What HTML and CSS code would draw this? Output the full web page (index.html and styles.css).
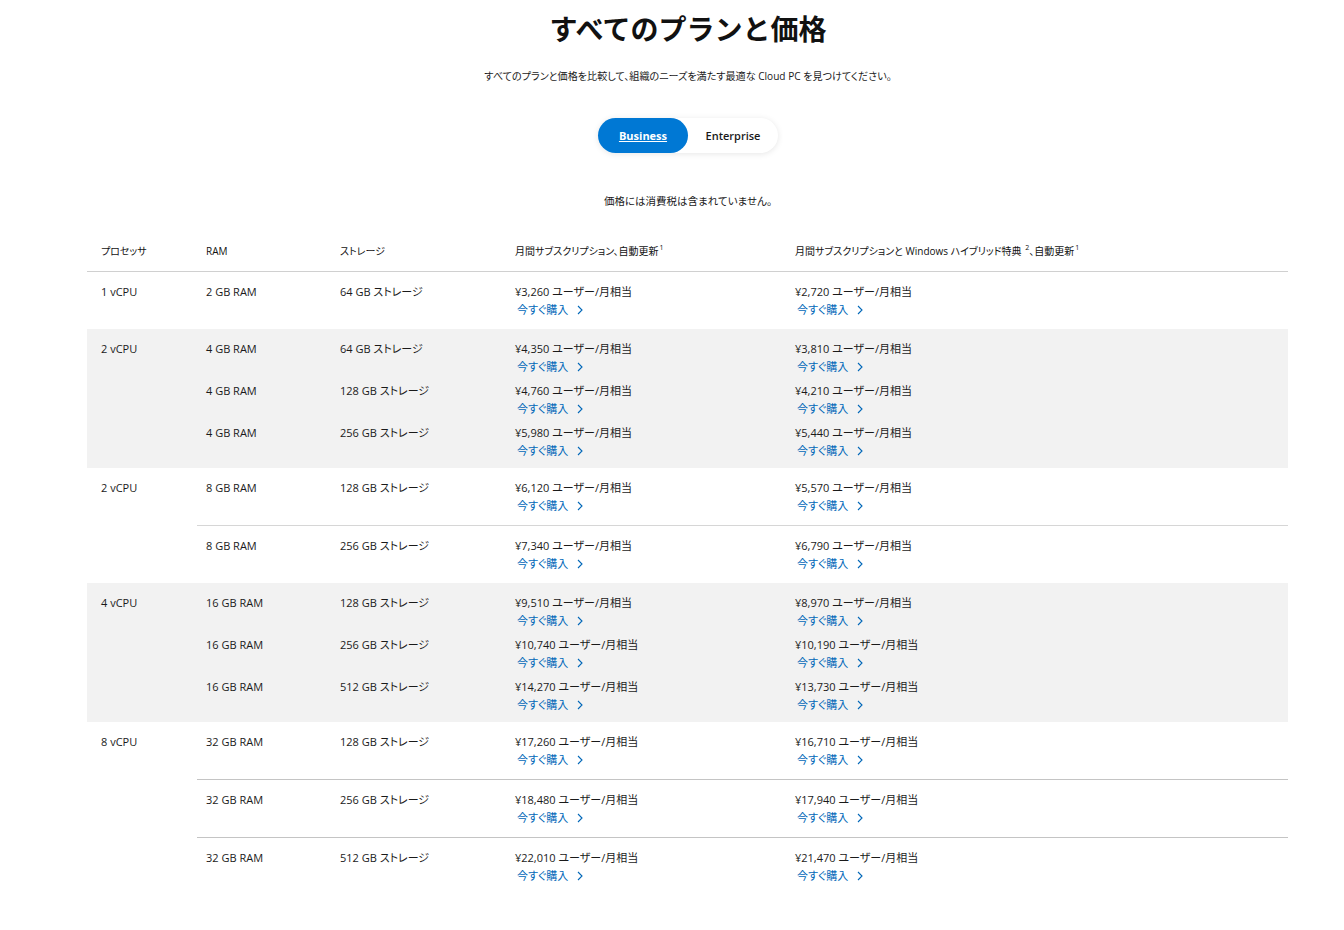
FILE: index.html
```html
<!DOCTYPE html>
<html lang="ja">
<head>
<meta charset="utf-8">
<title>すべてのプランと価格</title>
<link rel="stylesheet" href="styles.css">
</head>
<body>
<main class="page">
  <div class="intro">
    <h1 class="title">すべてのプランと価格</h1>
    <p class="subtitle">すべてのプランと価格を比較して、組織のニーズを満たす最適な Cloud PC を見つけてください。</p>
    <div class="toggle-wrap">
      <div class="toggle">
        <a class="tab active" href="#">Business</a>
        <a class="tab" href="#">Enterprise</a>
      </div>
    </div>
    <p class="note">価格には消費税は含まれていません。</p>
  </div>

  <div class="table">
    <div class="head">
      <div>プロセッサ</div>
      <div>RAM</div>
      <div>ストレージ</div>
      <div>月間サブスクリプション、自動更新<sup>1</sup></div>
      <div>月間サブスクリプションと Windows ハイブリッド特典 <sup>2</sup>、自動更新<sup>1</sup></div>
    </div>

    <div class="group white">
      <div class="proc">1 vCPU</div>
      <div class="subs">
        <div class="sub"><div>2 GB RAM</div><div>64 GB ストレージ</div><div class="price"><span>¥3,260 ユーザー/月相当</span><a href="#">今すぐ購入<svg viewBox="0 0 6 10"><path d="M1 1l4 4-4 4"/></svg></a></div><div class="price"><span>¥2,720 ユーザー/月相当</span><a href="#">今すぐ購入<svg viewBox="0 0 6 10"><path d="M1 1l4 4-4 4"/></svg></a></div></div>
      </div>
    </div>

    <div class="group gray">
      <div class="proc">2 vCPU</div>
      <div class="subs">
        <div class="sub"><div>4 GB RAM</div><div>64 GB ストレージ</div><div class="price"><span>¥4,350 ユーザー/月相当</span><a href="#">今すぐ購入<svg viewBox="0 0 6 10"><path d="M1 1l4 4-4 4"/></svg></a></div><div class="price"><span>¥3,810 ユーザー/月相当</span><a href="#">今すぐ購入<svg viewBox="0 0 6 10"><path d="M1 1l4 4-4 4"/></svg></a></div></div>
        <div class="sub"><div>4 GB RAM</div><div>128 GB ストレージ</div><div class="price"><span>¥4,760 ユーザー/月相当</span><a href="#">今すぐ購入<svg viewBox="0 0 6 10"><path d="M1 1l4 4-4 4"/></svg></a></div><div class="price"><span>¥4,210 ユーザー/月相当</span><a href="#">今すぐ購入<svg viewBox="0 0 6 10"><path d="M1 1l4 4-4 4"/></svg></a></div></div>
        <div class="sub"><div>4 GB RAM</div><div>256 GB ストレージ</div><div class="price"><span>¥5,980 ユーザー/月相当</span><a href="#">今すぐ購入<svg viewBox="0 0 6 10"><path d="M1 1l4 4-4 4"/></svg></a></div><div class="price"><span>¥5,440 ユーザー/月相当</span><a href="#">今すぐ購入<svg viewBox="0 0 6 10"><path d="M1 1l4 4-4 4"/></svg></a></div></div>
      </div>
    </div>

    <div class="group white">
      <div class="proc">2 vCPU</div>
      <div class="subs">
        <div class="sub"><div>8 GB RAM</div><div>128 GB ストレージ</div><div class="price"><span>¥6,120 ユーザー/月相当</span><a href="#">今すぐ購入<svg viewBox="0 0 6 10"><path d="M1 1l4 4-4 4"/></svg></a></div><div class="price"><span>¥5,570 ユーザー/月相当</span><a href="#">今すぐ購入<svg viewBox="0 0 6 10"><path d="M1 1l4 4-4 4"/></svg></a></div></div>
        <div class="sub"><div>8 GB RAM</div><div>256 GB ストレージ</div><div class="price"><span>¥7,340 ユーザー/月相当</span><a href="#">今すぐ購入<svg viewBox="0 0 6 10"><path d="M1 1l4 4-4 4"/></svg></a></div><div class="price"><span>¥6,790 ユーザー/月相当</span><a href="#">今すぐ購入<svg viewBox="0 0 6 10"><path d="M1 1l4 4-4 4"/></svg></a></div></div>
      </div>
    </div>

    <div class="group gray">
      <div class="proc">4 vCPU</div>
      <div class="subs">
        <div class="sub"><div>16 GB RAM</div><div>128 GB ストレージ</div><div class="price"><span>¥9,510 ユーザー/月相当</span><a href="#">今すぐ購入<svg viewBox="0 0 6 10"><path d="M1 1l4 4-4 4"/></svg></a></div><div class="price"><span>¥8,970 ユーザー/月相当</span><a href="#">今すぐ購入<svg viewBox="0 0 6 10"><path d="M1 1l4 4-4 4"/></svg></a></div></div>
        <div class="sub"><div>16 GB RAM</div><div>256 GB ストレージ</div><div class="price"><span>¥10,740 ユーザー/月相当</span><a href="#">今すぐ購入<svg viewBox="0 0 6 10"><path d="M1 1l4 4-4 4"/></svg></a></div><div class="price"><span>¥10,190 ユーザー/月相当</span><a href="#">今すぐ購入<svg viewBox="0 0 6 10"><path d="M1 1l4 4-4 4"/></svg></a></div></div>
        <div class="sub"><div>16 GB RAM</div><div>512 GB ストレージ</div><div class="price"><span>¥14,270 ユーザー/月相当</span><a href="#">今すぐ購入<svg viewBox="0 0 6 10"><path d="M1 1l4 4-4 4"/></svg></a></div><div class="price"><span>¥13,730 ユーザー/月相当</span><a href="#">今すぐ購入<svg viewBox="0 0 6 10"><path d="M1 1l4 4-4 4"/></svg></a></div></div>
      </div>
    </div>

    <div class="group white thick">
      <div class="proc">8 vCPU</div>
      <div class="subs">
        <div class="sub"><div>32 GB RAM</div><div>128 GB ストレージ</div><div class="price"><span>¥17,260 ユーザー/月相当</span><a href="#">今すぐ購入<svg viewBox="0 0 6 10"><path d="M1 1l4 4-4 4"/></svg></a></div><div class="price"><span>¥16,710 ユーザー/月相当</span><a href="#">今すぐ購入<svg viewBox="0 0 6 10"><path d="M1 1l4 4-4 4"/></svg></a></div></div>
        <div class="sub"><div>32 GB RAM</div><div>256 GB ストレージ</div><div class="price"><span>¥18,480 ユーザー/月相当</span><a href="#">今すぐ購入<svg viewBox="0 0 6 10"><path d="M1 1l4 4-4 4"/></svg></a></div><div class="price"><span>¥17,940 ユーザー/月相当</span><a href="#">今すぐ購入<svg viewBox="0 0 6 10"><path d="M1 1l4 4-4 4"/></svg></a></div></div>
        <div class="sub"><div>32 GB RAM</div><div>512 GB ストレージ</div><div class="price"><span>¥22,010 ユーザー/月相当</span><a href="#">今すぐ購入<svg viewBox="0 0 6 10"><path d="M1 1l4 4-4 4"/></svg></a></div><div class="price"><span>¥21,470 ユーザー/月相当</span><a href="#">今すぐ購入<svg viewBox="0 0 6 10"><path d="M1 1l4 4-4 4"/></svg></a></div></div>
      </div>
    </div>
  </div>
</main>
</body>
</html>
```

FILE: styles.css
```css
* { box-sizing: border-box; }
html, body { margin: 0; padding: 0; background: #fff; }
body {
  font-family: "Open Sans", "Noto Sans CJK JP", sans-serif;
  font-feature-settings: "palt";
  color: #1a1a1a;
  font-size: 11px;
}
.page { padding-top: 8px; }
.intro { padding-left: 32px; }
.title {
  margin: 0;
  text-align: center;
  font-family: "Noto Sans CJK JP", sans-serif;
  font-feature-settings: normal;
  font-size: 28px;
  line-height: 40px;
  font-weight: 700;
  color: #111;
}
.subtitle {
  margin: 19px 0 0;
  text-align: center;
  font-size: 10.1px;
  line-height: 18px;
}
.toggle-wrap {
  display: flex;
  justify-content: center;
  margin-top: 33px;
}
.toggle {
  display: flex;
  width: 180px;
  height: 35px;
  border-radius: 18px;
  background: #fff;
  box-shadow: 0 1px 6px rgba(0,0,0,0.10);
}
.tab {
  width: 90px;
  height: 35px;
  display: flex;
  align-items: center;
  justify-content: center;
  font-family: "Open Sans", sans-serif;
  font-feature-settings: normal;
  font-size: 11px;
  font-weight: 600;
  color: #1a1a1a;
  text-decoration: none;
  border-radius: 18px;
}
.tab.active {
  background: #0078d4;
  color: #fff;
  font-weight: 700;
  text-decoration: underline;
}
.note {
  margin: 39px 0 0;
  text-align: center;
  font-size: 10.5px;
  line-height: 18px;
}
.table {
  margin: 21px 0 0 87px;
  width: 1201px;
}
.head {
  display: grid;
  grid-template-columns: 105px 134px 175px 280px 1fr;
  padding: 11px 0 11px 14px;
  border-bottom: 1px solid #d0d0d0;
  font-size: 10px;
  line-height: 18px;
  font-weight: 400;
  color: #111;
}
.head sup {
  font-size: 7px;
  line-height: 0;
  vertical-align: 5px;
  margin-left: 1px;
}
.group {
  display: grid;
  grid-template-columns: 96px 1fr;
  padding-left: 14px;
}
.group.gray { background: #f2f2f2; padding-top: 11px; padding-bottom: 8px; }
.proc { line-height: 18px; padding-top: 11px; }
.group.gray .proc { padding-top: 0; }
.subs { display: flex; flex-direction: column; }
.group.gray .subs { gap: 6px; }
.sub {
  display: grid;
  grid-template-columns: 134px 175px 280px 1fr;
  padding-left: 9px;
  line-height: 18px;
}
.group.white .sub { padding-top: 11px; padding-bottom: 10px; }
.group.white .sub + .sub { border-top: 1px solid #d6d6d6; }
.group.thick .sub + .sub { border-top-color: #c4c4c4; }
.price { display: flex; flex-direction: column; }
.price a {
  color: #0067b8;
  text-decoration: none;
  display: inline-flex;
  align-items: center;
  padding-left: 2px;
}
.price a svg {
  width: 6px;
  height: 10px;
  margin-left: 9px;
  fill: none;
  stroke: #0067b8;
  stroke-width: 1.1;
}
```
